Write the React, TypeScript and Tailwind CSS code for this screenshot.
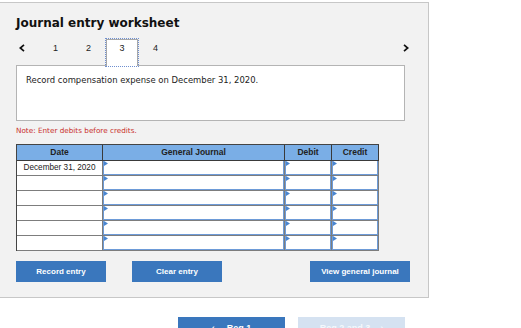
import React from 'react';

const rows = ['December 31, 2020', '', '', '', '', ''];

function Marker() {
    return (
        <svg className="absolute left-0 top-0" width="4" height="5" viewBox="0 0 4 5">
            <polygon points="0,0 4,2.5 0,5" fill="#4a86d0" />
        </svg>
    );
}

function InputCell() {
    return (
        <div className="h-[15px] border-b border-r border-[#7d7d7d]">
            <div className="relative h-full bg-white border-l border-b border-r border-[#6d9bd8]">
                <Marker />
            </div>
        </div>
    );
}

export default function App() {
    const font = { fontFamily: '"DejaVu Sans", Verdana, sans-serif' };
    const arial = { fontFamily: '"Liberation Sans", Arial, sans-serif' };

    return (
        <div className="w-[521px] h-[328px] overflow-hidden bg-white">
            {/* Worksheet panel */}
            <div className="mt-[2px] w-[429px] h-[296px] bg-[#f2f2f2] border-t border-r border-b border-[#c7c7c7] pl-[16px] pt-[13px]">
                <h1 className="text-[12px] leading-[14px] font-bold text-[#111]" style={font}>
                    Journal entry worksheet
                </h1>

                {/* Tabs */}
                <div className="mt-[8px] flex items-start h-[27px] relative z-10 text-[9px] leading-[11px] text-[#222]" style={arial}>
                    <div className="w-[23px] pl-[3px] pt-[6px]">
                        <svg width="6" height="8" viewBox="0 0 6 8">
                            <polyline points="5,0.8 1.3,4 5,7.2" fill="none" stroke="#111" strokeWidth="1.7" />
                        </svg>
                    </div>
                    <div className="w-[33px] text-center pt-[5px]">1</div>
                    <div className="w-[33px] text-center pt-[5px]">2</div>
                    <div className="w-[34px] h-[29px] border border-dotted border-[#6f8fd0]">
                        <div className="h-full bg-white border-l border-r border-t border-[#a8a8a8] text-center pt-[3px]">3</div>
                    </div>
                    <div className="w-[33px] text-center pt-[5px]">4</div>
                    <div className="ml-[231px] pt-[6px]">
                        <svg width="6" height="8" viewBox="0 0 6 8">
                            <polyline points="1,0.8 4.7,4 1,7.2" fill="none" stroke="#111" strokeWidth="1.7" />
                        </svg>
                    </div>
                </div>

                {/* Instruction */}
                <div className="w-[389px] h-[56px] bg-white border border-[#b4b4b4] px-[9px] pt-[9px] text-[8.45px] leading-[10px] text-[#222]" style={font}>
                    Record compensation expense on December 31, 2020.
                </div>

                <p className="mt-[5px] text-[7.25px] leading-[9px] text-[#c9302c]" style={font}>
                    Note: Enter debits before credits.
                </p>

                {/* Journal table */}
                <div className="mt-[9px] w-[363px] grid grid-cols-[86px_182px_47px_47px] border-l border-t border-[#444]" style={arial}>
                    {['Date', 'General Journal', 'Debit', 'Credit'].map((h) => (
                        <div
                            key={h}
                            className="h-[16px] bg-[#7aaee6] border-r border-b border-[#3a3a3a] flex items-center justify-center text-[8.5px] font-bold text-[#222]"
                        >
                            {h}
                        </div>
                    ))}
                    {rows.map((d, i) => (
                        <React.Fragment key={i}>
                            <div className="h-[15px] bg-white border-r border-b border-[#7d7d7d] flex items-center justify-center text-[8.2px] text-[#222]">
                                {d}
                            </div>
                            <InputCell />
                            <InputCell />
                            <InputCell />
                        </React.Fragment>
                    ))}
                </div>

                {/* Actions */}
                <div className="mt-[10px] flex text-[8px] font-bold text-white" style={arial}>
                    <button className="w-[90px] h-[21px] bg-[#3a77bd]">Record entry</button>
                    <button className="ml-[26px] w-[90px] h-[21px] bg-[#3a77bd]">Clear entry</button>
                    <button className="ml-[88px] w-[100px] h-[21px] bg-[#3a77bd]">View general journal</button>
                </div>
            </div>

            {/* Requirement navigation */}
            <div className="mt-[19px] ml-[178px] flex gap-[13px] text-[9px] font-bold text-white" style={arial}>
                <button className="w-[107px] h-[24px] bg-[#3a77bd] flex items-center justify-center gap-[12px]">
                    <span>&lsaquo;</span>
                    <span>Req 1</span>
                </button>
                <button className="w-[107px] h-[24px] bg-[#d5e2f1] flex items-center justify-center gap-[10px] text-[#f4f8fc]">
                    <span>Req 2 and 3</span>
                    <span>&rsaquo;</span>
                </button>
            </div>
        </div>
    );
}
